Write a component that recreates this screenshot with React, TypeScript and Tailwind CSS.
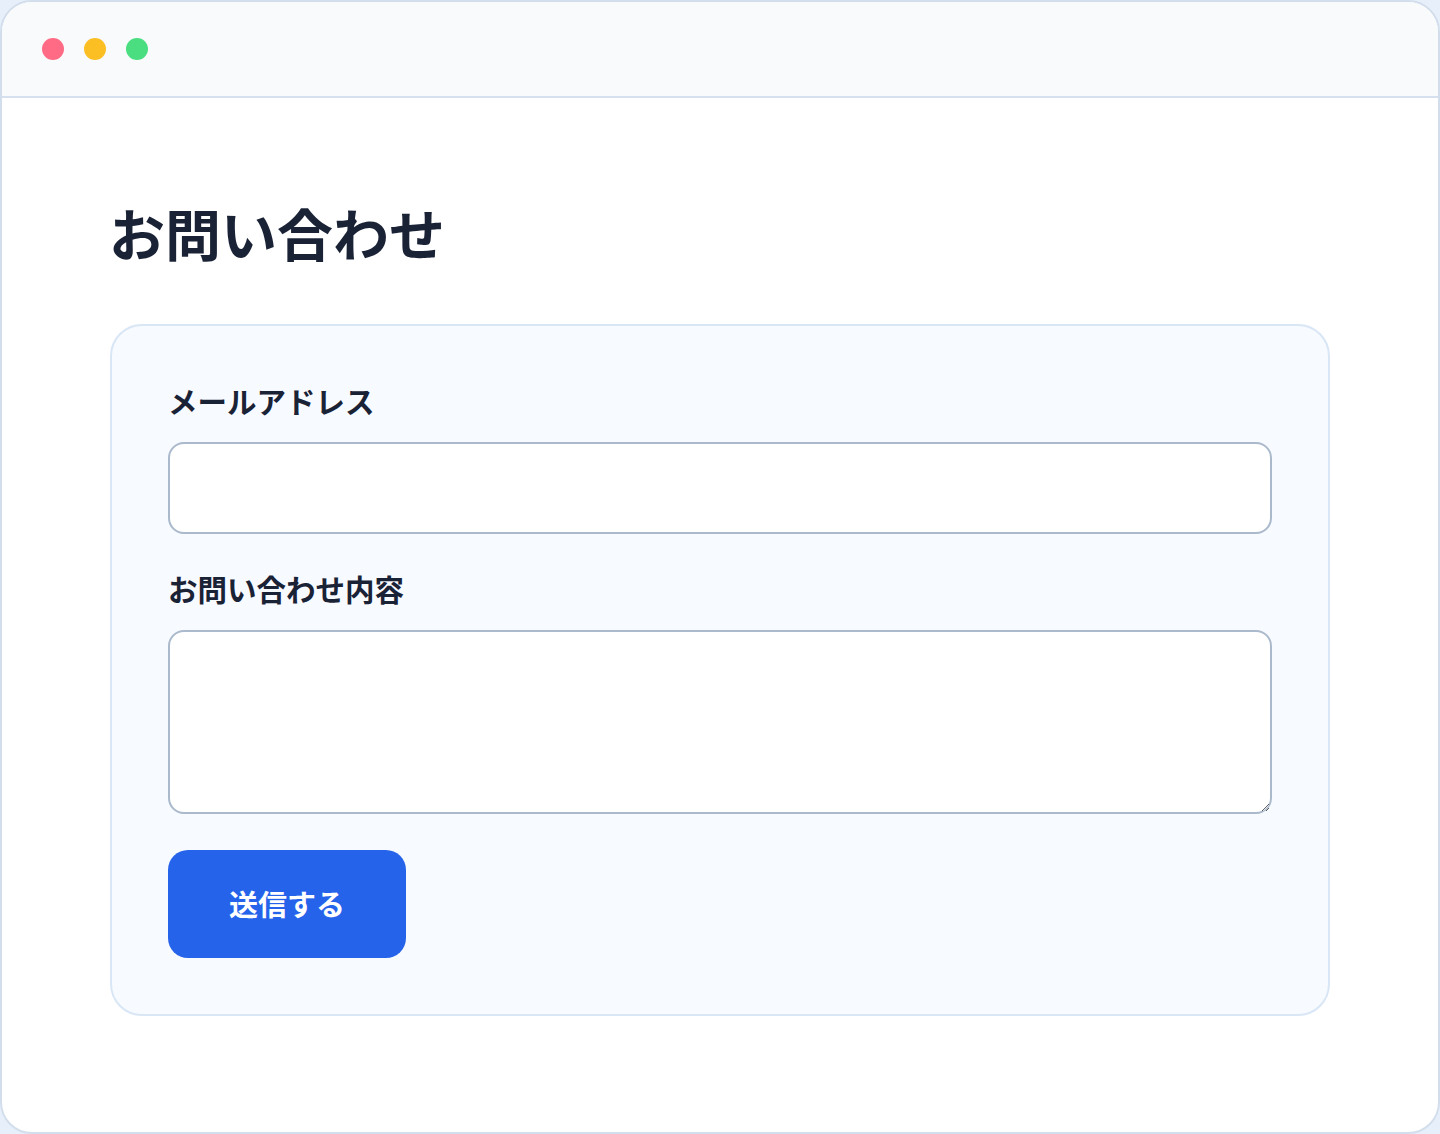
export default function App() {
  const font = { fontFamily: '"Noto Sans CJK JP", "Noto Sans", sans-serif' };

  return (
    <div className="w-[1440px] h-[1134px] bg-[#e7effb]" style={font}>
      <div className="h-full w-full rounded-[32px] border-2 border-[#d3deec] bg-white overflow-hidden flex flex-col">
        {/* title bar */}
        <div className="h-[96px] shrink-0 bg-[#f8fafc] border-b-2 border-[#d6e0ee] flex items-center gap-[20px] pl-[40px]">
          <span className="w-[22px] h-[22px] rounded-full bg-[#ff6b85]" />
          <span className="w-[22px] h-[22px] rounded-full bg-[#fbbf24]" />
          <span className="w-[22px] h-[22px] rounded-full bg-[#4ade80]" />
        </div>

        <main className="px-[108px] pt-[100px]">
          <h1 className="text-[56px] leading-[1.2] font-bold text-[#1a2236] mb-[59px] -ml-[1px]">お問い合わせ</h1>

          <form
            className="rounded-[32px] border-2 border-[#d9e6f5] bg-[#f7faff] px-[56px] pt-[52px] pb-[56px]"
            onSubmit={(e) => e.preventDefault()}
          >
            <label className="block text-[29.5px] leading-[1.5] font-bold text-[#1a2236] mb-[20px]">
              メールアドレス
            </label>
            <input
              type="email"
              className="block w-full h-[92px] rounded-[16px] border-2 border-[#aab9cc] bg-white px-5 text-[26px] outline-none"
            />

            <label className="block text-[29.5px] leading-[1.5] font-bold text-[#1a2236] mt-[32px] mb-[19px]">
              お問い合わせ内容
            </label>
            <textarea className="block w-full h-[184px] rounded-[16px] border-2 border-[#aab9cc] bg-white px-5 py-4 text-[26px] outline-none" />

            <button
              type="submit"
              className="mt-[36px] w-[238px] h-[108px] rounded-[20px] bg-[#2563eb] text-white text-[29px] font-bold"
            >
              送信する
            </button>
          </form>
        </main>
      </div>
    </div>
  );
}
